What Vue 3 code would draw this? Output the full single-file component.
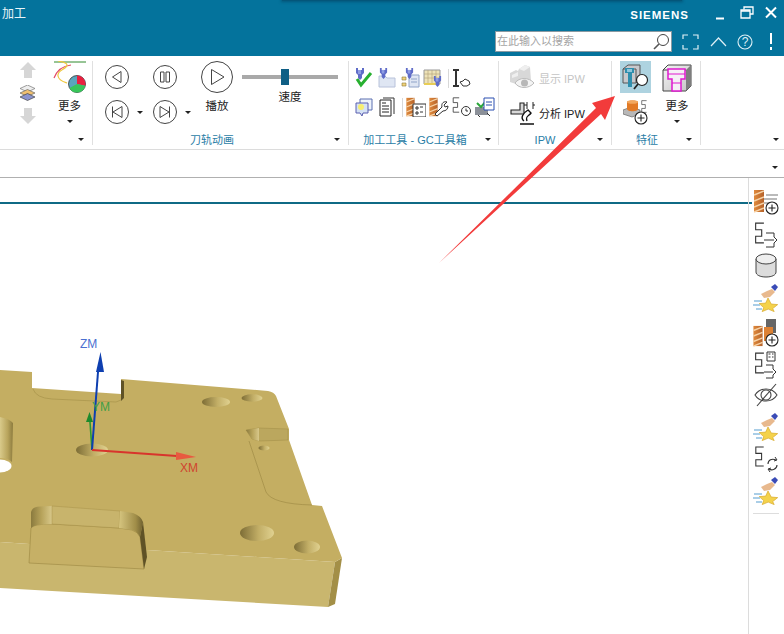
<script setup>
const rail = ['drillAdd', 'treeOut', 'drum', 'star', 'drillBlockAdd', 'treeDoc', 'eyeOff', 'star', 'treeCycle', 'star']
</script>

<template>
  <div class="app">
    <svg class="sprites" width="0" height="0" aria-hidden="true">
      <defs>
        <linearGradient id="orange" x1="0" x2="1" y1="0" y2="0"><stop offset="0" stop-color="#e08a3c"/><stop offset="1" stop-color="#b5622a"/></linearGradient>
        <linearGradient id="wall" x1="0" x2="1" y1="0" y2="0"><stop offset="0" stop-color="#8a7a3e"/><stop offset=".5" stop-color="#b7a35b"/><stop offset="1" stop-color="#d8c88a"/></linearGradient>
        <linearGradient id="bore" x1="0" x2="1" y1="0" y2="0"><stop offset="0" stop-color="#d9ca8a"/><stop offset=".6" stop-color="#b8a45c"/><stop offset="1" stop-color="#8c7b3e"/></linearGradient>
        <linearGradient id="wallR" x1="0" x2="1" y1="0" y2="0"><stop offset="0" stop-color="#d6c57f"/><stop offset=".7" stop-color="#a08d48"/><stop offset="1" stop-color="#6f6130"/></linearGradient>
        <linearGradient id="hole" x1="0" x2="1" y1="0" y2="0"><stop offset="0" stop-color="#7d6d36"/><stop offset=".55" stop-color="#c2ae66"/><stop offset="1" stop-color="#e0d190"/></linearGradient>
        <linearGradient id="boxFace" x1="0" x2="1" y1="0" y2="1"><stop offset="0" stop-color="#f4f4f4"/><stop offset="1" stop-color="#c4c4c4"/></linearGradient>
        <symbol id="tool" viewBox="0 0 10 12"><path d="M1 0h2v2h4V0h2v5L7 7v3L5 12 3 10V7L1 5z" fill="#5f6cc8"/><path d="M3 2h3v4H3z" fill="#8e9ce2"/></symbol>
        <symbol id="drill" viewBox="0 0 10 24"><path d="M0 1h10v22H0z" fill="url(#orange)"/><path d="M0 6l10-4M0 12l10-4M0 18l10-4M0 23l10-4" stroke="#f6d3a8" stroke-width="1.5" fill="none"/></symbol>
        <symbol id="plus" viewBox="0 0 14 14"><circle cx="7" cy="7" r="6" fill="#fff" stroke="#222" stroke-width="1.1"/><path d="M7 3.500v7M3.500 7h7" stroke="#222" stroke-width="1.1"/></symbol>
        <symbol id="tree" viewBox="0 0 10 20"><path d="M9 1H1.500V7H7V13H1.500V19H9" fill="none" stroke="#333" stroke-width="1"/></symbol>
        <symbol id="drillAdd" viewBox="0 0 26 28"><use href="#drill" x="1" y="1" width="10" height="24"/><path d="M13 7h12M11 11h13M11 15h8" stroke="#777" stroke-width="1.100"/><use href="#plus" x="12" y="13" width="14" height="14"/></symbol>
        <symbol id="treeOut" viewBox="0 0 26 28"><use href="#tree" x="1" y="2" width="11" height="22"/><path d="M13 13h8v4l3 3-3 3v4h-8M11 20h10" fill="none" stroke="#333" stroke-width="1"/></symbol>
        <symbol id="drum" viewBox="0 0 26 28"><path d="M3 7v13c0 3 4 5 10 5s10-2 10-5V7z" fill="#dcdcdc" stroke="#444"/><ellipse cx="13" cy="7" rx="10" ry="5" fill="#efefef" stroke="#444"/></symbol>
        <symbol id="star" viewBox="0 0 26 28"><path d="M15 14l3.200 6 6.500.6-5 4 1.500 3-6-2.500-6 2.500 1.500-4-4.500-4 6.500-.5z" fill="#f4d24b" stroke="#d7a92a" stroke-width=".7"/><path d="M8 10l6-3 5-2 3 3-5 5-6 1z" fill="#e8b98e"/><path d="M18 3l4-3 3 3-3 4z" fill="#3a4bb6"/><path d="M1 17h8M0 21h7M3 25h6" stroke="#8fbfe0" stroke-width="1.500"/></symbol>
        <symbol id="drillBlockAdd" viewBox="0 0 26 28"><use href="#drill" x="0" y="6" width="10" height="22"/><path d="M13 0h10v14H13z" fill="#666"/><path d="M11 8h9v14h-9z" fill="#dd8133"/><use href="#plus" x="12" y="14" width="14" height="14"/></symbol>
        <symbol id="treeDoc" viewBox="0 0 26 28"><use href="#tree" x="1" y="1" width="11" height="22"/><path d="M14 1h8v9h-8z" fill="none" stroke="#333"/><path d="M15.500 3h2M19 3h1.500M15.500 6h2M19 6h1.500" stroke="#333"/><path d="M13 14h7v4l3 3-3 3v3h-7M11 21h9" fill="none" stroke="#333" stroke-width="1"/></symbol>
        <symbol id="eyeOff" viewBox="0 0 26 28"><path d="M2 14c5-8 17-8 22 0-5 8-17 8-22 0z" fill="none" stroke="#444" stroke-width="1.100"/><circle cx="13" cy="14" r="5" fill="none" stroke="#444" stroke-width="1.100"/><path d="M4 25L23 3" stroke="#444" stroke-width="1.100"/></symbol>
        <symbol id="treeCycle" viewBox="0 0 26 28"><use href="#tree" x="1" y="1" width="11" height="21"/><path d="M15 19c0-4 4-6 8-4M24 20c0 4-5 6-8 4" fill="none" stroke="#333" stroke-width="1.100"/><path d="M22 12l2 3-3 1M17 27l-2-3 3-1" fill="none" stroke="#333"/></symbol>
      </defs>
    </svg>

    <header class="titlebar">
      <div class="title-top">
        <span class="title">加工</span>
        <span class="brand">SIEMENS</span>
        <div class="win-controls">
          <svg width="12" height="14" viewBox="0 0 12 14"><path d="M2 12.500h8" stroke="#fff" stroke-width="2"/></svg>
          <svg width="14" height="14" viewBox="0 0 14 14"><path d="M4 3.500V1h9v7h-3" fill="none" stroke="#fff" stroke-width="1.300"/><path d="M1 4h9v8H1z" fill="none" stroke="#fff" stroke-width="1.300"/><path d="M1 5h9" stroke="#fff" stroke-width="1.500"/></svg>
          <svg width="14" height="14" viewBox="0 0 14 14"><path d="M2 1.500l10 10M12 1.500l-10 10" stroke="#fff" stroke-width="2"/></svg>
        </div>
      </div>
      <div class="title-bottom">
        <div class="search">
          <span>在此输入以搜索</span>
          <svg width="18" height="18" viewBox="0 0 18 18"><circle cx="11" cy="7" r="5.500" fill="#fff" stroke="#444"/><path d="M7 11l-5 5" stroke="#555" stroke-width="1.600"/></svg>
        </div>
        <div class="title-tools">
          <svg width="17" height="16" viewBox="0 0 17 16"><path d="M1 5V1h5M11 1h5v4M16 11v4h-5M6 15H1v-4" fill="none" stroke="#dff0f6" stroke-width="1.200"/></svg>
          <svg width="17" height="12" viewBox="0 0 17 12"><path d="M1 10l7.500-8 7.500 8" fill="none" stroke="#dff0f6" stroke-width="1.200"/></svg>
          <svg width="16" height="16" viewBox="0 0 16 16"><circle cx="8" cy="8" r="7" fill="none" stroke="#dff0f6" stroke-width="1.100"/><text x="8" y="12" text-anchor="middle" class="q">?</text></svg>
          <svg class="bang" width="4" height="17" viewBox="0 0 4 17"><path d="M2 0v11" stroke="#fff" stroke-width="2"/><path d="M2 14v3" stroke="#fff" stroke-width="2"/></svg>
        </div>
      </div>
    </header>

    <section class="ribbon">
      <div class="group g0">
        <div class="body">
          <div class="col-arrows">
            <svg width="16" height="16" viewBox="0 0 16 16"><path d="M8 0l8 8h-4v8H4V8H0z" fill="#d6d6d6"/></svg>
            <svg width="17" height="16" viewBox="0 0 17 16"><path d="M8.500 0L16 3.500 8.500 7 1 3.500z" fill="#eee" stroke="#777" stroke-width=".7"/><path d="M1 8l7.500 3.500L16 8 8.500 4.500z" fill="#f0c070" stroke="#666" stroke-width=".7"/><path d="M1 12l7.500 3.500L16 12 8.500 8.500z" fill="#8b94cf" stroke="#444" stroke-width=".7"/></svg>
            <svg width="16" height="16" viewBox="0 0 16 16"><path d="M8 16l8-8h-4V0H4v8H0z" fill="#d6d6d6"/></svg>
          </div>
          <div class="col-big">
            <svg width="33" height="32" viewBox="0 0 33 32">
              <path d="M1 1h32" stroke="#2f8a2c" stroke-width="1"/>
              <path d="M1 17c3-8 8-12 17-13" fill="none" stroke="#e24a66" stroke-width="1.200"/>
              <path d="M5 0c7 1 11 3 8 6-3 3-9 4-8 9 1 5 6 6 9 7" fill="none" stroke="#efc83e" stroke-width="1.200"/>
              <circle cx="24" cy="23" r="8.500" fill="#5aa5bd" stroke="#222" stroke-width=".7"/>
              <path d="M24 23V14.500a8.500 8.500 0 0 1 8.300 10.300z" fill="#e8203f"/>
              <path d="M24 23l8.300 1.800A8.500 8.500 0 0 1 16.500 27z" fill="#38c55a"/>
            </svg>
            <span class="label">更多</span>
            <i class="caret"></i>
          </div>
        </div>
        <div class="foot"><i class="caret corner"></i></div>
      </div>

      <div class="group g1">
        <div class="body">
          <div class="transport">
            <div class="tbtn"><svg width="24" height="24" viewBox="0 0 24 24"><circle cx="12" cy="12" r="11.500" class="ring"/><path d="M16 6.500v11L7.500 12z" class="glyph"/></svg></div>
            <div class="tbtn"><svg width="24" height="24" viewBox="0 0 24 24"><circle cx="12" cy="12" r="11.500" class="ring"/><path d="M7.500 7h3.500v10H7.500zM13 7h3.500v10H13z" class="glyph"/></svg></div>
            <div class="tbtn"><svg width="24" height="24" viewBox="0 0 24 24"><circle cx="12" cy="12" r="11.500" class="ring"/><path d="M7.500 6.500v11M17 6.500v11L8 12z" class="glyph"/></svg><i class="caret side"></i></div>
            <div class="tbtn"><svg width="24" height="24" viewBox="0 0 24 24"><circle cx="12" cy="12" r="11.500" class="ring"/><path d="M16.500 6.500v11M7 6.500v11L16 12z" class="glyph"/></svg><i class="caret side"></i></div>
          </div>
          <div class="play">
            <svg width="32" height="32" viewBox="0 0 32 32"><circle cx="16" cy="16" r="15.500" class="ring"/><path d="M10.500 8.500v15L23 16z" class="glyph"/></svg>
            <span class="label">播放</span>
          </div>
          <div class="speed">
            <div class="track"><span class="thumb"></span></div>
            <span class="label">速度</span>
          </div>
        </div>
        <div class="foot"><span class="foot-label l1">刀轨动画</span><i class="caret corner"></i></div>
      </div>

      <div class="group g2">
        <div class="body">
          <div class="tools">
            <svg width="20" height="20" viewBox="0 0 20 20"><use href="#tool" x="1" y="0" width="10" height="12"/><path d="M3 11l4 6L17 5" fill="none" stroke="#28b030" stroke-width="3"/></svg>
            <svg width="20" height="20" viewBox="0 0 20 20"><path d="M2 8h6l2 2h8v9H2z" fill="#dfe6f3" stroke="#b8c2da"/><use href="#tool" x="2" y="0" width="9" height="11"/></svg>
            <svg width="20" height="20" viewBox="0 0 20 20"><path d="M9 7h10v12H9z" fill="#dfe6f3" stroke="#8fa3c8"/><path d="M2 9h4v3H2zM2 15h4v3H2z" fill="#f1d27a" stroke="#8a7a3a" stroke-width=".6"/><path d="M11 11h6M11 14h6" stroke="#8fa3c8"/><use href="#tool" x="5" y="0" width="9" height="11"/></svg>
            <svg width="20" height="20" viewBox="0 0 20 20"><path d="M1 2h16v14H1z" fill="#eee3b8" stroke="#999"/><path d="M1 6h16M1 10h16M5 2v14M9 2v14M13 2v14" stroke="#b8a880" stroke-width=".7"/><path d="M1 15h12v2H1z" fill="#e8cd55"/><use href="#tool" x="10" y="8" width="9" height="11"/></svg>
            <i class="sep s1"></i>
            <svg width="20" height="20" viewBox="0 0 20 20"><path d="M2 2h6M2 18h6M5 2v16" fill="none" stroke="#333" stroke-width="2"/><path d="M9 14l3-1 2-2 4 2 1 3-3 2h-4z" fill="#fff" stroke="#333"/></svg>
          </div>
          <div class="tools second">
            <svg width="20" height="20" viewBox="0 0 20 20"><path d="M6 2h12v11H6z" fill="#eef3fb" stroke="#5a6fb0"/><path d="M2 6h12v10H9l-1 3-2-3H2z" fill="#d5e2f4" stroke="#5a5fb0"/><circle cx="7" cy="10" r="3" fill="#f7ee70"/></svg>
            <svg width="20" height="20" viewBox="0 0 20 20"><path d="M6 1h11v16" fill="none" stroke="#333"/><path d="M3 3h11v16H3z" fill="#fff" stroke="#222"/><path d="M5 6h4M5 9h7M5 12h7M5 15h7" stroke="#222"/></svg>
            <i class="sep"></i>
            <svg width="20" height="20" viewBox="0 0 20 20"><use href="#drill" x="0" y="0" width="9" height="20"/><path d="M7 7h13v13H7z" fill="#fff" stroke="#333"/><path d="M10 10h2v2h-2zM14 10h3M10 15h2v2h-2zM14 15h3" stroke="#333" fill="none"/></svg>
            <svg width="20" height="20" viewBox="0 0 20 20"><use href="#drill" x="0" y="0" width="9" height="20"/><path d="M6 17l7-7c-1-4 2-6 5-5l-3 3 1 2 3-1c0 3-2 5-5 5l-6 5z" fill="#fff" stroke="#333"/></svg>
            <svg width="20" height="20" viewBox="0 0 20 20"><use href="#tree" x="0" y="0" width="8" height="16"/><circle cx="14" cy="14" r="4.500" fill="#fff" stroke="#333"/><path d="M14 11.500V14h2" fill="none" stroke="#333"/></svg>
            <svg width="20" height="20" viewBox="0 0 20 20"><path d="M0 10h13v8H0z" fill="#8b9098"/><path d="M2 6l4 4 6-7" fill="none" stroke="#2aa83a" stroke-width="2"/><path d="M9 1h10v12H9z" fill="#fff" stroke="#2a4fb0"/><path d="M11 5h6M11 8h6" stroke="#2a4fb0"/><path d="M3 18l2 2M12 16l3 3" stroke="#333"/></svg>
          </div>
        </div>
        <div class="foot"><span class="foot-label l2">加工工具 - GC工具箱</span><i class="caret corner"></i></div>
      </div>

      <div class="group g3">
        <div class="body">
          <div class="ipw muted">
            <svg width="25" height="25" viewBox="0 0 25 25"><path d="M0 8l6-3 2 1 1-2 6-4 5 2 1 14-9 5-12-4z" fill="#d8d8d8"/><path d="M9 4l6-4 5 2-6 4z" fill="#efefef"/><path d="M2 10l6-3v4l-6 2z" fill="#efefef"/><path d="M5 18c4-6 14-6 19 0-5 6-15 6-19 0z" fill="#f4f4f4" stroke="#bbb"/><circle cx="14.500" cy="18" r="3.500" fill="#b8b8b8"/></svg>
            <span>显示 IPW</span>
          </div>
          <div class="ipw">
            <svg width="25" height="25" viewBox="0 0 25 25"><path d="M1 10h9V3h4v11H1z" fill="#d8d8d8" stroke="#222" stroke-width="1.100"/><path d="M17 2v7M23 2v7M14 5h3M23 5h2" stroke="#222"/><path d="M10 24h14M14 21c-4-3-1-8 4-11l3 3c-2 3-6 3-4 8" fill="#fff" stroke="#111" stroke-width="1.400"/></svg>
            <span>分析 IPW</span>
          </div>
        </div>
        <div class="foot"><span class="foot-label l3">IPW</span><i class="caret corner"></i></div>
      </div>

      <div class="group g4">
        <div class="body">
          <div class="col-a">
            <div class="active">
              <svg width="31" height="32" viewBox="0 0 31 32">
                <path d="M3 8l5-4h12v15l-4 3H3z" fill="#c8c8cc" stroke="#555"/>
                <path d="M3 8h13v14" fill="none" stroke="#555"/>
                <path d="M5 7h9v5h-2v14H8V12H5z" fill="#2f8ead"/><path d="M7 8h5v3H7z" fill="#8fc6dc"/>
                <circle cx="22" cy="19" r="5.500" fill="#fff" stroke="#222" stroke-width="1.200"/>
                <path d="M18 23l-4 5" stroke="#222" stroke-width="1.800"/>
              </svg>
            </div>
            <svg class="small" width="26" height="25" viewBox="0 0 26 25">
              <path d="M0 10l8-3 9 3v4l-8 3-9-3z" fill="#b8b8b8" stroke="#666" stroke-width=".7"/>
              <path d="M4 2c0-2 11-2 11 0v7c0 3-11 3-11 0z" fill="#e27a26"/><ellipse cx="9.500" cy="2" rx="5.500" ry="1.800" fill="#f2a860"/>
              <use href="#tree" x="17" y="0" width="8" height="13"/>
              <use href="#plus" x="11" y="11" width="14" height="14"/>
            </svg>
          </div>
          <div class="col-b">
            <svg width="30" height="28" viewBox="0 0 30 28">
              <path d="M1 6l5-5h23v21l-5 5H1z" fill="url(#boxFace)" stroke="#444"/>
              <path d="M24 6v21l5-5V1z" fill="#7e7e7e"/>
              <path d="M1 6h23" stroke="#444"/>
              <path d="M6 5h17v10h-4v12h-9V15H6z" fill="#f6f0f6" stroke="#e018d0" stroke-width="1.500"/>
              <path d="M6 10h17M10 19h9" stroke="#e018d0"/>
            </svg>
            <span class="label">更多</span>
            <i class="caret"></i>
          </div>
        </div>
        <div class="foot"><span class="foot-label l4">特征</span><i class="caret corner"></i></div>
      </div>

      <div class="group g5">
        <div class="foot end"><i class="caret corner"></i></div>
      </div>
    </section>

    <div class="strip"><i class="caret"></i></div>

    <main class="workspace">
      <div class="viewport">
        <svg class="scene" viewBox="0 178 752 456" width="752" height="456">
          <path d="M0 542L29 544 147 550 335 562 328 607 0 588z" fill="#c9b66e"/>
          <path d="M342 558L335 562 328 607 335 604z" fill="#a38f47"/>
          <path d="M0 370L32 372V388L121 394V379L268 391Q274 392 276 396L289 429V440L312 505 322 506 342 558 335 562 147 550 29 544 0 542z" fill="#c4ae62"/>
          <path d="M33 389Q36 398 52 399L116 402 121 400" fill="none" stroke="#a8934a" stroke-width=".7"/>
          <path d="M121 380V401L124 398V381z" fill="#5f5226"/>
          <path d="M0 417Q10 419 13 423L12 462Q8 458 0 458z" fill="url(#bore)"/>
          <ellipse cx="0" cy="466" rx="11.500" ry="6.500" fill="#fff"/>
          <path d="M246 430L259 428 288 429V440L260 441 252 439z" fill="#bba75e" stroke="#a08c46" stroke-width=".5"/>
          <path d="M246 430L259 428V441L252 439z" fill="url(#wall)"/>
          <path d="M249 441Q258 468 266 492 272 504 312 505" fill="none" stroke="#9a8742" stroke-width=".6"/>
          <ellipse cx="216" cy="402" rx="14" ry="5" fill="url(#hole)"/>
          <ellipse cx="252" cy="398" rx="10.500" ry="3.700" fill="url(#hole)"/>
          <ellipse cx="92" cy="450" rx="16" ry="6.500" fill="url(#hole)"/>
          <ellipse cx="264" cy="448" rx="5.500" ry="2.400" fill="url(#hole)"/>
          <ellipse cx="257" cy="533" rx="17" ry="8" fill="url(#hole)"/>
          <ellipse cx="307" cy="547" rx="13" ry="6.500" fill="url(#hole)"/>
          <path d="M29 563L31 528Q33 524 52 524L119 528 132 530Q138 532 140 537L144 569z" fill="#c6b066" stroke="#9a8742" stroke-width=".6"/>
          <path d="M31 528V512Q32 507 40 506.500L52 506V524L37 525Q33 526 31 528z" fill="url(#wall)"/>
          <path d="M52 506L120 511 119 528 52 524z" fill="#c8b46c" stroke="#a8934a" stroke-width=".5"/>
          <path d="M120 511L133 513Q141 516 143 522L140 537Q137 531 132 530L119 528z" fill="url(#wallR)"/>
          <path d="M143 522L147 557 144 569 140 537z" fill="#5f5226"/>

          <path d="M92 450L90 422" stroke="#2a9a32" stroke-width="1.600"/>
          <path d="M89.500 412L93 422H86z" fill="#1c8a2c"/>
          <path d="M92 450L98 372" stroke="#0e3fb0" stroke-width="2"/>
          <path d="M100.500 352L104 372H96z" fill="#0e3fb0"/>
          <path d="M92 450L177 456" stroke="#d8342c" stroke-width="1.800"/>
          <path d="M176 452L196 457 176 460z" fill="#e85a40"/>
          <text x="80" y="348" class="axis zm">ZM</text>
          <text x="92" y="411" class="axis ym">YM</text>
          <text x="180" y="472" class="axis xm">XM</text>
        </svg>
      </div>
      <aside class="rail">
        <svg v-for="(icon, i) in rail" :key="i" class="rail-icon" width="26" height="28" viewBox="0 0 26 28"><use :href="'#' + icon" width="26" height="28"/></svg>
        <i class="rail-end"></i>
      </aside>
    </main>

    <div class="top-shadow"></div>
    <svg class="callout" width="784" height="634" viewBox="0 0 784 634">
      <path d="M439 263L596 108 592 103 615 96 605 120 601 114z" fill="#f23b3b"/>
    </svg>
  </div>
</template>

<style scoped>
.app {
  position: relative;
  width: 784px;
  height: 634px;
  overflow: hidden;
  background: #fff;
  color: #222;
  font-family: "Liberation Sans", "Noto Sans CJK SC", sans-serif;
  font-size: 11px;
}
.sprites { position: absolute; }
i { display: block; }

.titlebar { height: 56px; background: #04739c; color: #fff; }
.title-top { display: flex; align-items: flex-start; height: 28px; }
.title { font-size: 12px; line-height: 16px; margin: 6px 0 0 2px; flex: 1; color: #e8f4f8; }
.brand { font-weight: 700; font-size: 11.5px; line-height: 14px; margin-top: 8px; letter-spacing: 1px; }
.win-controls { display: flex; gap: 12px; margin: 6px 6px 0 25px; }
.win-controls svg:nth-child(2) { margin-left: 2px; margin-right: -2px; }
.title-bottom { display: flex; align-items: flex-start; justify-content: flex-end; padding-right: 11px; }
.search {
  width: 177px; height: 21px; box-sizing: border-box; margin-top: 3px;
  display: flex; align-items: center; justify-content: space-between;
  background: #fff; border: 1px solid #8a9aa2; padding: 0 1px;
  color: #a4a4a4; font-size: 11px; line-height: 19px;
}
.title-tools { display: flex; align-items: center; height: 27px; margin-left: 10px; gap: 10px; }
.title-tools svg:nth-child(2) { margin: 0 0 0 1px; }
.bang { margin-left: 6px; }
.q { font: 12px "Liberation Sans", sans-serif; fill: #dff0f6; }

.ribbon { display: flex; height: 94px; box-sizing: border-box; border-bottom: 1px solid #dcdcdc; }
.group { position: relative; display: flex; flex-direction: column; box-sizing: border-box; }
.group:not(.g5)::after { content: ""; position: absolute; right: 0; top: 5px; bottom: 4px; width: 1px; background: #e0e0e0; }
.body { height: 76px; box-sizing: border-box; padding-top: 5px; }
.foot { position: relative; height: 16px; }
.foot-label { position: absolute; top: 0; line-height: 16px; color: #2a7da6; font-size: 11px; white-space: nowrap; transform: translateX(-50%); }
.foot .corner { position: absolute; top: 6px; }
.caret { width: 0; height: 0; border: 3px solid transparent; border-top: 3px solid #222; border-bottom: 0; }
.label { font-size: 11.5px; line-height: 14px; color: #222; white-space: nowrap; }

.g0 { width: 93px; }
.g0 .body { display: flex; padding-left: 19px; gap: 17px; }
.col-arrows { display: flex; flex-direction: column; align-items: center; gap: 7px; width: 17px; padding-top: 1px; }
.col-big { display: flex; flex-direction: column; align-items: center; width: 33px; }
.col-big .label { margin-top: 6px; }
.col-big .caret { margin-top: 7px; }
.g0 .corner { left: 78px; }

.g1 { width: 256px; }
.g1 .body { display: flex; padding-left: 12px; }
.transport { display: grid; grid-template-columns: 48px 48px; grid-auto-rows: 24px; row-gap: 11px; padding-top: 4px; }
.tbtn { display: flex; align-items: center; height: 24px; }
.side { margin-left: 8px; }
.ring { fill: #fff; stroke: #444; stroke-width: 1; }
.glyph { fill: none; stroke: #444; stroke-width: 1; }
.play { display: flex; flex-direction: column; align-items: center; width: 32px; }
.play .label { margin-top: 6px; }
.speed { display: flex; flex-direction: column; align-items: center; width: 96px; margin-left: 9px; padding-top: 8px; }
.track { position: relative; width: 96px; height: 16px; background: linear-gradient(#0000 6px, #a9a9a9 6px, #a9a9a9 10px, #0000 10px); }
.thumb { position: absolute; left: 39px; top: 0; width: 8px; height: 16px; background: #0f5f85; }
.speed .label { margin-top: 5px; }
.g1 .corner { left: 241px; }
.l1 { left: 119px; }

.g2 { width: 150px; }
.g2 .body { padding: 10px 0 0 5px; }
.tools { display: flex; align-items: center; gap: 3px; height: 24px; }
.tools.second { margin-top: 5px; }
.sep { width: 1px; height: 19px; margin-left: 2px; background: #d8d8d8; }
.sep.s1 { margin-right: -1px; }
.g2 .corner { left: 136px; }
.l2 { left: 66px; }

.g3 { width: 113px; }
.g3 .body { padding: 9px 0 0 11px; }
.ipw { display: flex; align-items: center; gap: 4px; height: 25px; font-size: 11px; white-space: nowrap; }
.ipw + .ipw { margin-top: 10px; }
.muted { color: #c4c4c4; }
.g3 .corner { left: 98px; }
.l3 { left: 46px; }

.g4 { width: 89px; }
.g4 .body { display: flex; padding-left: 8px; gap: 11px; }
.col-a { display: flex; flex-direction: column; width: 31px; }
.active { width: 31px; height: 32px; background: #aed3e0; }
.small { margin: 7px 0 0 3px; }
.col-b { display: flex; flex-direction: column; align-items: center; width: 30px; padding-top: 3px; }
.col-b .label { margin-top: 7px; }
.col-b .caret { margin-top: 7px; }
.g4 .corner { left: 74px; }
.l4 { left: 35px; }

.g5 { flex: 1; justify-content: flex-end; padding-bottom: 1px; }
.end .corner { left: 72px; }

.strip { position: relative; height: 28px; box-sizing: border-box; border-bottom: 1px solid #b0b0b0; }
.strip .caret { position: absolute; right: 6px; top: 16px; }

.workspace { display: flex; height: 456px; }
.viewport { position: relative; flex: 1; min-width: 0; }
.viewport::before { content: ""; position: absolute; left: 0; top: 24px; width: 752px; height: 2px; background: #0f6a85; }
.scene { position: absolute; left: 0; top: 0; }
.axis { font: 12px "Liberation Sans", sans-serif; }
.zm { fill: #4a6fd0; }
.ym { fill: #3f9f45; }
.xm { fill: #d0452f; }

.rail {
  position: relative; width: 36px; box-sizing: border-box;
  border-left: 1px solid #dcdcdc; padding: 10px 0 0 4px;
  display: flex; flex-direction: column; gap: 4px;
}
.rail-icon { flex: none; }
.rail-icon:nth-child(5) { margin-top: 3px; }
.rail-icon:nth-child(7) { margin-top: -2px; }
.rail-end { width: 26px; height: 1px; background: #ddd; margin-top: 4px; }

.top-shadow { position: absolute; left: 282px; top: 0; width: 400px; height: 1px; background: #04567a; box-shadow: 0 0 3px 1px #04567a; }
.callout { position: absolute; left: 0; top: 0; pointer-events: none; }
</style>
